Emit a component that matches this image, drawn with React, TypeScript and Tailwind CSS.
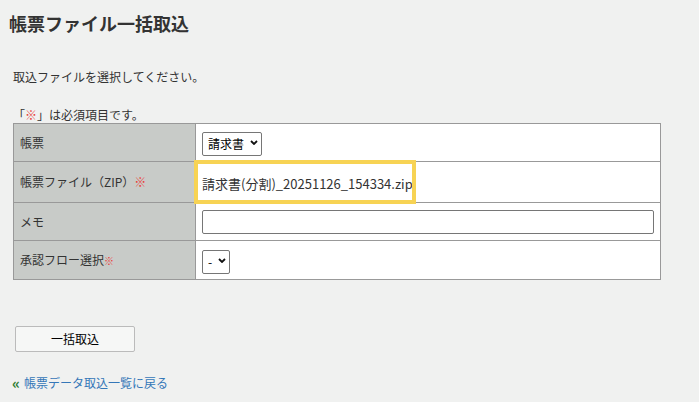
import React from "react";

const labelCell = "bg-[#c8cbc8] border border-[#999] pl-[6px] text-[12px] text-[#333] align-middle";
const valueCell = "bg-white border border-[#999] pl-[6px] align-middle";

function Req({ small }: { small?: boolean }) {
  return <span className={small ? "text-[#e8413a] text-[10px]" : "text-[#e8413a] text-[12px]"}>※</span>;
}

function Select({ value }: { value: string }) {
  return (
    <span className="relative inline-block align-middle">
      <select className="appearance-none h-[24px] pl-[5px] pr-[16px] border border-[#767676] rounded-[2px] bg-white text-[12px] text-black">
        <option>{value}</option>
      </select>
      <svg
        className="absolute right-[4px] top-[10px] pointer-events-none"
        width="8"
        height="5"
        viewBox="0 0 8 5"
      >
        <path d="M1 1 L4 4 L7 1" fill="none" stroke="#111" strokeWidth="1.8" />
      </svg>
    </span>
  );
}

export default function App() {
  return (
    <div
      className="w-[699px] h-[402px] bg-[#f0f1f0] text-[#333] overflow-hidden"
      style={{ fontFamily: '"Noto Sans CJK JP", "Noto Sans", sans-serif' }}
    >
      <h1 className="pt-[13px] pl-[9px] text-[18px] font-bold leading-[20px] text-[#333]">
        帳票ファイル一括取込
      </h1>

      <p className="mt-[36px] pl-[13px] text-[12px] leading-[16px]">取込ファイルを選択してください。</p>

      <p className="mt-[22px] pl-[13px] text-[12px] leading-[16px]">
        「<Req />」は必須項目です。
      </p>

      <table className="ml-[13px] w-[648px] border-collapse border border-[#999]">
        <tbody>
          <tr className="h-[38px]">
            <td className={labelCell + " w-[182px]"}>帳票</td>
            <td className={valueCell}>
              <Select value="請求書" />
            </td>
          </tr>
          <tr className="h-[41px]">
            <td className={labelCell}>
              帳票ファイル（ZIP）<Req />
            </td>
            <td className={valueCell + " relative"}>
              <span className="text-[13px] text-[#333]">請求書(分割)_20251126_154334.zip</span>
              <div className="absolute left-[-2px] top-[-2px] w-[222px] h-[44px] border-[4px] border-[#f7d354] pointer-events-none" />
            </td>
          </tr>
          <tr className="h-[38px]">
            <td className={labelCell}>メモ</td>
            <td className={valueCell}>
              <input type="text" className="block w-[452px] h-[24px] border border-[#767676] rounded-[2px] bg-white" />
            </td>
          </tr>
          <tr className="h-[39px]">
            <td className={labelCell}>
              承認フロー選択<Req small />
            </td>
            <td className={valueCell}>
              <Select value="-" />
            </td>
          </tr>
        </tbody>
      </table>

      <button className="mt-[46px] ml-[15px] block w-[120px] h-[26px] bg-[#f6f7f6] border border-[#bbb] rounded-[2px] text-[12px] text-black">
        一括取込
      </button>

      <p className="mt-[23px] pl-[12px] text-[12px] leading-[16px] flex items-center">
        <span className="text-[#2e7d32] font-bold text-[15px] leading-[16px] mr-[4px]">«</span>
        <a className="text-[#3577b8]">帳票データ取込一覧に戻る</a>
      </p>
    </div>
  );
}
